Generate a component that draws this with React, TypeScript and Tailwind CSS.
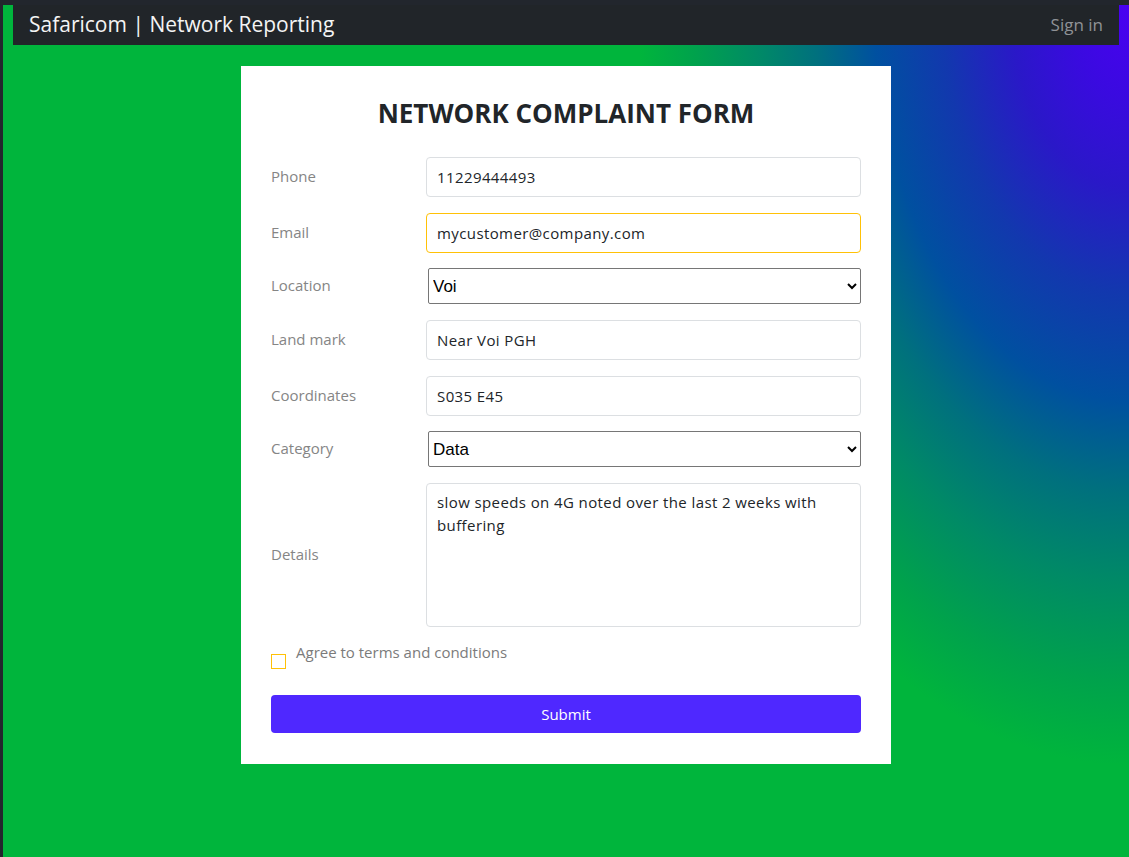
import React, { useState } from 'react';

const font = 'font-["Open_Sans","Noto_Sans",sans-serif]';

interface FieldProps {
  label: string;
  children: React.ReactNode;
}

const Field: React.FC<FieldProps> = ({ label, children }) => (
  <div className="flex items-center">
    <label className="w-[155px] shrink-0 text-[15px] text-[#858585] -translate-y-px">{label}</label>
    <div className="flex-1">{children}</div>
  </div>
);

const inputCls =
  'block w-full h-10 px-[10px] rounded-[4px] border border-[#dcdfe2] bg-white text-[15px] tracking-[0.4px] text-[#212529] outline-none';

const selectCls =
  'block ml-[2px] w-[433px] h-9 pl-0 rounded-[2px] border border-[#767676] bg-white text-[17px] text-black font-["Liberation_Sans",Arial,sans-serif] outline-none';

export default function App() {
  const [form, setForm] = useState({
    phone: '11229444493',
    email: 'mycustomer@company.com',
    location: 'Voi',
    landmark: 'Near Voi PGH',
    coords: 'S035 E45',
    category: 'Data',
    details: 'slow speeds on 4G noted over the last 2 weeks with buffering',
    agree: false,
  });

  const set = (name: string) => (
    e: React.ChangeEvent<HTMLInputElement | HTMLSelectElement | HTMLTextAreaElement>
  ) => setForm((prev) => ({ ...prev, [name]: e.target.value }));

  return (
    <div className={`min-h-[857px] bg-[#22262d] pt-[5px] pl-[3px] ${font}`}>
      <div className="min-h-[852px] bg-[#00b53c] bg-[radial-gradient(ellipse_490px_760px_at_100%_0%,#4a00f2_0%,#3a0ae0_12%,#2a18c8_24%,#1238ae_38%,#0050a0_52%,#00707e_64%,#008a66_76%,#00a24c_89%,#00b53c_100%)] pb-[93px]">
        {/* Top nav */}
        <nav className="mx-[10px] h-10 bg-[#212529] flex items-center justify-between pl-4 pr-4">
          <span className="text-[21px] text-[#f4f4f4]">Safaricom | Network Reporting</span>
          <a className="text-[17px] text-[#8f9296]">Sign in</a>
        </nav>

        {/* Form card */}
        <div className="mx-auto mt-[21px] w-[650px] bg-white px-[30px] pt-[30px] pb-[31px]">
          <h1 className="text-center text-[26px] leading-[34px] font-bold text-[#212529]">
            NETWORK COMPLAINT FORM
          </h1>

          <form className="mt-[27px] flex flex-col" onSubmit={(e) => e.preventDefault()}>
            <Field label="Phone">
              <input className={inputCls} value={form.phone} onChange={set('phone')} />
            </Field>
            <div className="mt-4">
              <Field label="Email">
                <input
                  className={`${inputCls} border-[#ffc107]`}
                  value={form.email}
                  onChange={set('email')}
                />
              </Field>
            </div>
            <div className="mt-[15px]">
              <Field label="Location">
                <select className={selectCls} value={form.location} onChange={set('location')}>
                  <option>Voi</option>
                  <option>Mombasa</option>
                  <option>Nairobi</option>
                </select>
              </Field>
            </div>
            <div className="mt-4">
              <Field label="Land mark">
                <input className={inputCls} value={form.landmark} onChange={set('landmark')} />
              </Field>
            </div>
            <div className="mt-4">
              <Field label="Coordinates">
                <input className={inputCls} value={form.coords} onChange={set('coords')} />
              </Field>
            </div>
            <div className="mt-[15px]">
              <Field label="Category">
                <select className={selectCls} value={form.category} onChange={set('category')}>
                  <option>Data</option>
                  <option>Voice</option>
                  <option>SMS</option>
                </select>
              </Field>
            </div>
            <div className="mt-4">
              <Field label="Details">
                <textarea
                  className="block w-full h-[144px] px-[10px] pt-[7px] rounded-[4px] border border-[#dcdfe2] bg-white text-[15px] leading-[23px] tracking-[0.4px] text-[#212529] outline-none resize-none"
                  value={form.details}
                  onChange={set('details')}
                />
              </Field>
            </div>

            <label className="mt-[14px] flex items-start">
              <input
                type="checkbox"
                checked={form.agree}
                onChange={(e) => setForm((p) => ({ ...p, agree: e.target.checked }))}
                className="appearance-none mt-[13px] w-[15px] h-[15px] border border-[#ffc107] bg-white shrink-0"
              />
              <span className="ml-[10px] text-[15px] text-[#7b7b7b]">Agree to terms and conditions</span>
            </label>

            <button
              type="submit"
              className="mt-[26px] h-[38px] w-full rounded-[4px] bg-[#4f28ff] text-[15px] text-white"
            >
              Submit
            </button>
          </form>
        </div>
      </div>
    </div>
  );
}
